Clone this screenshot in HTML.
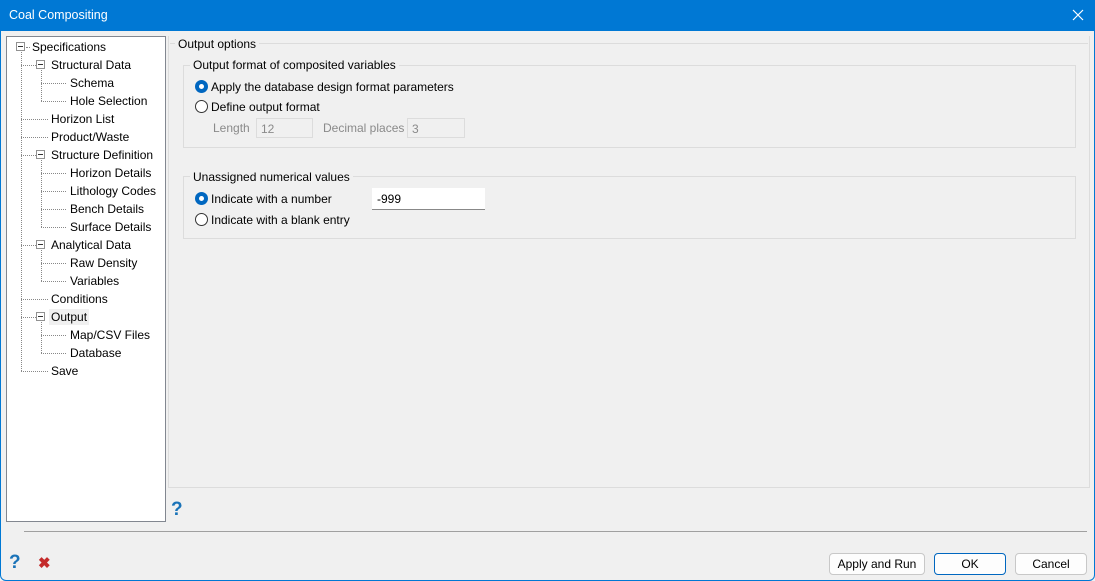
<!DOCTYPE html>
<html><head><style>
*{margin:0;padding:0;box-sizing:border-box}
body{width:1095px;height:581px;background:#fff;font-family:"Liberation Sans",sans-serif;font-size:12px;color:#000;position:relative;overflow:hidden}
.win{position:absolute;left:0;top:0;width:1095px;height:581px;background:#f0f0f0}
.frame{position:absolute;left:0;top:0;width:1095px;height:581px;border:1px solid #0078d4;border-radius:0 0 6px 6px;pointer-events:none}
.title{position:absolute;left:0;top:0;width:1095px;height:31px;background:#0078d4;color:#fff;font-size:12.5px}
.title span{position:absolute;left:9px;top:8px}
.a{position:absolute;white-space:nowrap}
.vl{position:absolute;border-left:1px dotted #888;width:0}
.hl{position:absolute;border-top:1px dotted #888;height:0}
.bx{position:absolute;width:9px;height:9px;border:1px solid #919191;background:#fff}
.bx:after{content:"";position:absolute;left:1px;top:3px;width:5px;height:1px;background:#333}
.grp{position:absolute;border:1px solid #dcdcdc}
.rad{position:absolute;width:13px;height:13px;border-radius:50%;border:1px solid #333;background:#fff}
.rad.on{background:#0067c0;border-color:#0067c0}
.rad.on:after{content:"";position:absolute;left:3px;top:3px;width:5px;height:5px;border-radius:50%;background:#fff}
.btn{position:absolute;height:22px;border:1px solid #c8c8c8;border-radius:4px;background:#fdfdfd;text-align:center;line-height:20px}
</style></head><body>
<div class="win">
<div class="title"><span>Coal Compositing</span>
<svg class="a" style="left:1072px;top:9px" width="12" height="12"><path d="M1 1L11 11M11 1L1 11" stroke="#fff" stroke-width="1.2"/></svg></div>

<div class="a" style="left:6px;top:36px;width:160px;height:486px;background:#fff;border:1px solid #828790"></div>
<div class="vl" style="left:21px;top:52px;height:319px"></div>
<div class="hl" style="left:26px;top:47px;width:4px"></div>
<div class="hl" style="left:21px;top:65px;width:15px"></div>
<div class="hl" style="left:21px;top:119px;width:27px"></div>
<div class="hl" style="left:21px;top:137px;width:27px"></div>
<div class="hl" style="left:21px;top:155px;width:15px"></div>
<div class="hl" style="left:21px;top:245px;width:15px"></div>
<div class="hl" style="left:21px;top:299px;width:27px"></div>
<div class="hl" style="left:21px;top:317px;width:15px"></div>
<div class="hl" style="left:21px;top:371px;width:27px"></div>
<div class="vl" style="left:41px;top:70px;height:31px"></div>
<div class="vl" style="left:41px;top:160px;height:67px"></div>
<div class="vl" style="left:41px;top:250px;height:31px"></div>
<div class="vl" style="left:41px;top:322px;height:31px"></div>
<div class="hl" style="left:41px;top:83px;width:25px"></div><div class="hl" style="left:41px;top:101px;width:25px"></div>
<div class="hl" style="left:41px;top:173px;width:25px"></div><div class="hl" style="left:41px;top:191px;width:25px"></div>
<div class="hl" style="left:41px;top:209px;width:25px"></div><div class="hl" style="left:41px;top:227px;width:25px"></div>
<div class="hl" style="left:41px;top:263px;width:25px"></div><div class="hl" style="left:41px;top:281px;width:25px"></div>
<div class="hl" style="left:41px;top:335px;width:25px"></div><div class="hl" style="left:41px;top:353px;width:25px"></div>
<div class="bx" style="left:16px;top:42px"></div>
<div class="bx" style="left:36px;top:60px"></div>
<div class="bx" style="left:36px;top:150px"></div>
<div class="bx" style="left:36px;top:240px"></div>
<div class="bx" style="left:36px;top:312px"></div>
<div class="a" style="left:32px;top:40px">Specifications</div>
<div class="a" style="left:51px;top:58px">Structural Data</div>
<div class="a" style="left:70px;top:76px">Schema</div>
<div class="a" style="left:70px;top:94px">Hole Selection</div>
<div class="a" style="left:51px;top:112px">Horizon List</div>
<div class="a" style="left:51px;top:130px">Product/Waste</div>
<div class="a" style="left:51px;top:148px">Structure Definition</div>
<div class="a" style="left:70px;top:166px">Horizon Details</div>
<div class="a" style="left:70px;top:184px">Lithology Codes</div>
<div class="a" style="left:70px;top:202px">Bench Details</div>
<div class="a" style="left:70px;top:220px">Surface Details</div>
<div class="a" style="left:51px;top:238px">Analytical Data</div>
<div class="a" style="left:70px;top:256px">Raw Density</div>
<div class="a" style="left:70px;top:274px">Variables</div>
<div class="a" style="left:51px;top:292px">Conditions</div>
<div class="a" style="left:49px;top:309px;background:#f0f0f0;padding:1px 2px">Output</div>
<div class="a" style="left:70px;top:328px">Map/CSV Files</div>
<div class="a" style="left:70px;top:346px">Database</div>
<div class="a" style="left:51px;top:364px">Save</div>

<div class="a" style="left:168px;top:36px;width:922px;height:452px;border-right:1px solid #dcdcdc;border-bottom:1px solid #dcdcdc;border-left:1px solid #dcdcdc"></div>
<div class="hl" style="left:170px;top:43px;width:918px;border-top:1px solid #dcdcdc"></div>
<div class="a" style="left:175px;top:37px;background:#f0f0f0;padding:0 3px">Output options</div>

<div class="grp" style="left:183px;top:65px;width:893px;height:83px"></div>
<div class="a" style="left:190px;top:58px;background:#f0f0f0;padding:0 3px">Output format of composited variables</div>
<div class="rad on" style="left:195px;top:80px"></div>
<div class="a" style="left:211px;top:80px">Apply the database design format parameters</div>
<div class="rad" style="left:195px;top:100px"></div>
<div class="a" style="left:211px;top:100px">Define output format</div>
<div class="a" style="left:213px;top:121px;color:#8a8a8a">Length</div>
<div class="a" style="left:256px;top:118px;width:57px;height:20px;border:1px solid #dcdcdc;color:#8a8a8a;padding:3px 4px">12</div>
<div class="a" style="left:323px;top:121px;color:#8a8a8a">Decimal places</div>
<div class="a" style="left:407px;top:118px;width:58px;height:20px;border:1px solid #dcdcdc;color:#8a8a8a;padding:3px 4px">3</div>

<div class="grp" style="left:183px;top:176px;width:893px;height:63px"></div>
<div class="a" style="left:190px;top:170px;background:#f0f0f0;padding:0 3px">Unassigned numerical values</div>
<div class="rad on" style="left:195px;top:192px"></div>
<div class="a" style="left:211px;top:192px">Indicate with a number</div>
<div class="a" style="left:372px;top:188px;width:113px;height:22px;background:#fff;border-bottom:1px solid #888;padding:4px 5px">-999</div>
<div class="rad" style="left:195px;top:213px"></div>
<div class="a" style="left:211px;top:213px">Indicate with a blank entry</div>

<div class="a" style="left:171px;top:499px;color:#1a73b8;font-weight:bold;font-size:19px">?</div>
<div class="a" style="left:24px;top:531px;width:1063px;height:1px;background:#a0a0a0"></div>
<div class="a" style="left:9px;top:552px;color:#1a73b8;font-weight:bold;font-size:19px">?</div>
<div class="a" style="left:38px;top:554px;color:#c42b2b;font-weight:bold;font-size:15px">✖</div>

<div class="btn" style="left:829px;top:553px;width:96px">Apply and Run</div>
<div class="btn" style="left:934px;top:553px;width:72px;border-color:#0067c0">OK</div>
<div class="btn" style="left:1015px;top:553px;width:72px">Cancel</div>
</div>
<div class="frame"></div>
</body></html>
